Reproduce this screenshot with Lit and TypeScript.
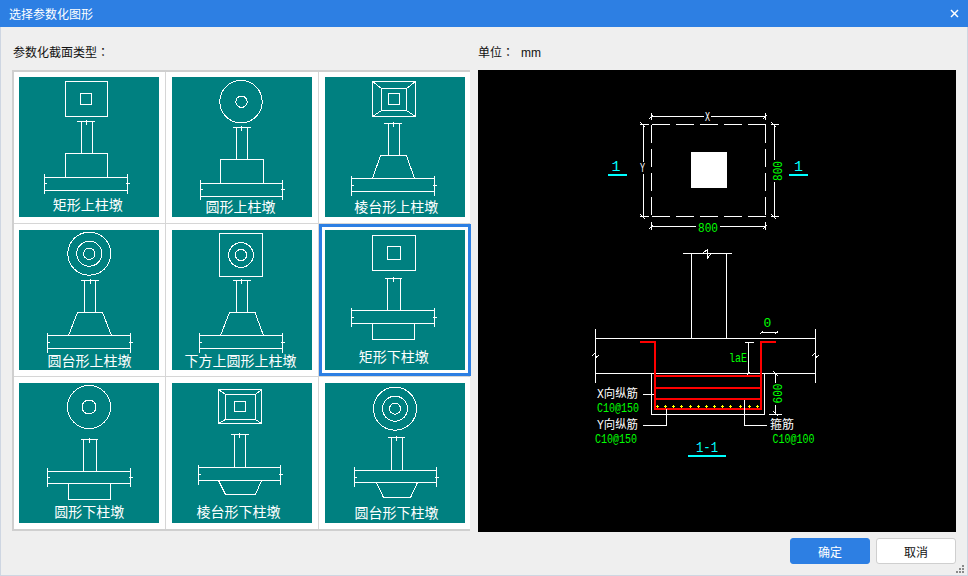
import { LitElement, html, svg, css } from 'lit';
import { customElement } from 'lit/decorators.js';

type Box = [number, number, number, number];

interface Tile {
  label: string;
  tx: number;
  ty: number;
  rects?: Box[];
  circles?: [number, number, number][];
  frame?: boolean; // diagonals between rects[0] and rects[1]
  dim: [number, number, number, number]; // x1, x2, y, tick x
  col: [number, number, number]; // x1, x2, bottom y
  base: string; // pedestal outline
  slab: [number, number, number, number, number, number, number]; // x1, x2, y1, y2, ext top, ext bottom, tick y
}

const TILES: Tile[] = [
  {
    label: '矩形上柱墩', tx: 68.7, ty: 133,
    rects: [[46.5, 4.5, 88.5, 39.5], [61.5, 16.5, 72.5, 27.5]],
    dim: [58, 76, 44.5, 67.5], col: [62.5, 73.5, 76.5],
    base: '46.5,100.5 46.5,76.5 88.5,76.5 88.5,100.5',
    slab: [25.5, 108.5, 100.5, 113.5, 97, 116.5, 106.5],
  },
  {
    label: '圆形上柱墩', tx: 68.5, ty: 135,
    circles: [[69, 24.7, 21.2], [69.5, 24.7, 5.7]],
    dim: [60.5, 78.5, 50.5, 69.5], col: [64.5, 75.5, 82.5],
    base: '48.5,106.5 48.5,82.5 91.5,82.5 91.5,106.5',
    slab: [28.5, 110.5, 106.5, 119.5, 103, 123, 112.5],
  },
  {
    label: '棱台形上柱墩', tx: 71.3, ty: 135,
    rects: [[47.5, 4.5, 90.5, 39.5], [56.5, 11.5, 81.5, 33.5], [63.5, 16.5, 74.5, 27.5]],
    frame: true,
    dim: [59, 77, 46.5, 68], col: [63.5, 74.5, 78.5],
    base: '47.5,101.5 55.5,78.5 81.5,78.5 89.5,101.5',
    slab: [26.5, 109.5, 101.5, 114.5, 99, 118.5, 108],
  },
  {
    label: '圆台形上柱墩', tx: 70.5, ty: 136,
    circles: [[70.3, 23.7, 21.5], [70.3, 23.7, 12.5], [70.3, 23.7, 5.7]],
    dim: [61.5, 79.5, 50.5, 71], col: [65.5, 76.5, 82.5],
    base: '49.5,105.5 58.5,82.5 83.5,82.5 92.5,105.5',
    slab: [28.5, 111.5, 105.5, 118.5, 103, 122.5, 112],
  },
  {
    label: '下方上圆形上柱墩', tx: 68.5, ty: 136,
    rects: [[47.5, 3.5, 90.5, 46.5]],
    circles: [[69, 25, 12.3], [69, 25, 5.7]],
    dim: [60.5, 78.5, 50.5, 69.5], col: [64.5, 75.5, 82.5],
    base: '48.5,105.5 57.5,82.5 83,82.5 91.5,105.5',
    slab: [27.5, 110.5, 105.5, 118.5, 103, 122.5, 112.5],
  },
  {
    label: '矩形下柱墩', tx: 68.7, ty: 132,
    rects: [[47.5, 5.5, 90.5, 40.5], [62.5, 16.5, 75.5, 29.5]],
    dim: [59.5, 77, 48.5, 68.5], col: [62.5, 75.5, 80.5],
    base: '47.5,93.5 47.5,109.5 89.5,109.5 89.5,93.5',
    slab: [26.5, 109.5, 80.5, 93.5, 77.5, 96.5, 87],
  },
  {
    label: '圆形下柱墩', tx: 70.3, ty: 134,
    circles: [[70, 24, 21.5], [70, 24, 7]],
    dim: [61.5, 78.5, 56.5, 70.5], col: [64.5, 77.5, 88.5],
    base: '49.5,100.5 49.5,116.5 91.5,116.5 91.5,100.5',
    slab: [28.5, 111.5, 88.5, 100.5, 84.5, 103.5, 94.5],
  },
  {
    label: '棱台形下柱墩', tx: 66.5, ty: 134,
    rects: [[46.5, 6.5, 89.5, 40.5], [53.5, 11.5, 83.5, 36.5], [62.5, 18.5, 73.5, 28.5]],
    frame: true,
    dim: [58.5, 76.5, 51.5, 67.5], col: [62.5, 73.5, 84.5],
    base: '46.5,97.5 53.5,111.5 83.5,111.5 89.5,97.5',
    slab: [26.5, 108.5, 84.5, 97.5, 82, 101.5, 91],
  },
  {
    label: '圆台形下柱墩', tx: 71.5, ty: 135,
    circles: [[70, 25.7, 21.5], [70, 25.7, 12.5], [70, 25.7, 5.5]],
    dim: [62.5, 80, 54.5, 71.5], col: [66.5, 77.5, 87.5],
    base: '51.5,99.5 58.5,114.5 85.5,114.5 92.5,99.5',
    slab: [29.5, 111.5, 87.5, 99.5, 83.5, 103.5, 94.5],
  },
];

const SELECTED = 5;
const REBAR_DOTS = [657, 665, 673, 681, 690, 698, 706, 714, 722, 730, 740, 749, 757];

const seg = (x1: number, y1: number, x2: number, y2: number) =>
  svg`<line x1=${x1} y1=${y1} x2=${x2} y2=${y2}></line>`;

function tileGraphic(t: Tile) {
  const [sx1, sx2, sy1, sy2, ext1, ext2, ty] = t.slab;
  const [dx1, dx2, dy, dt] = t.dim;
  const [cx1, cx2, cb] = t.col;
  const outer = t.rects?.[0];
  const mid = t.rects?.[1];
  return html`<svg class="tile" width="140" height="140" viewBox="0 0 140 140" shape-rendering="crispEdges">
    ${(t.rects ?? []).map(
      ([a, b, c, d]) => svg`<rect x=${a} y=${b} width=${c - a} height=${d - b}></rect>`,
    )}
    ${t.frame && outer && mid
      ? svg`${seg(outer[0], outer[1], mid[0], mid[1])}${seg(outer[2], outer[1], mid[2], mid[1])}
            ${seg(outer[0], outer[3], mid[0], mid[3])}${seg(outer[2], outer[3], mid[2], mid[3])}`
      : ''}
    ${(t.circles ?? []).map(([x, y, r]) => svg`<circle cx=${x} cy=${y} r=${r}></circle>`)}
    ${seg(dx1, dy, dx2, dy)}${seg(dt, dy - 2, dt, dy + 3)}
    ${seg(cx1, dy, cx1, cb)}${seg(cx2, dy, cx2, cb)}
    <polyline points=${t.base}></polyline>
    ${seg(sx1, sy1, sx2, sy1)}${seg(sx1, sy2, sx2, sy2)}
    ${seg(sx1, ext1, sx1, ext2)}${seg(sx2, ext1, sx2, ext2)}
    ${seg(sx1 - 1, ty, sx1 + 2, ty)}${seg(sx2 - 2, ty, sx2 + 2, ty)}
    <text x=${t.tx} y=${t.ty} text-anchor="middle">${t.label}</text>
  </svg>`;
}

@customElement('app-root')
export class AppRoot extends LitElement {
  static styles = css`
    :host {
      display: block;
      width: 968px;
      height: 576px;
      font-family: "Noto Sans CJK SC", "Liberation Sans", sans-serif;
      font-size: 12px;
      color: #111;
    }
    .dialog {
      position: relative;
      display: flex;
      flex-direction: column;
      width: 100%;
      height: 100%;
      background: #efefef;
    }
    .titlebar {
      display: flex;
      align-items: center;
      justify-content: space-between;
      flex: none;
      height: 27px;
      padding: 0 9px;
      background: #2d7fe3;
      color: #fff;
      line-height: 27px;
    }
    .close {
      display: block;
    }
    .close line {
      stroke: #fff;
      stroke-width: 1.5;
    }
    .body {
      flex: 1;
      display: flex;
      flex-direction: column;
      padding: 0 11px;
      border: solid #ced6e2;
      border-width: 0 1px 1px 1px;
    }
    .panels {
      display: grid;
      grid-template-columns: 460px 478px;
      gap: 6px;
    }
    .panel-label {
      height: 26px;
      padding-top: 17px;
      line-height: 16px;
    }
    .left .panel-label {
      padding-left: 1px;
    }
    .colon {
      font-family: "Noto Sans CJK TC", sans-serif;
    }
    .unit {
      margin-left: 7px;
      font-family: "Liberation Sans", sans-serif;
    }
    .picker {
      display: grid;
      grid-template-columns: 151px 152px 151px;
      grid-template-rows: 151px 152px 152px;
      gap: 1px;
      width: 454px;
      border: 2px solid #cfcfcf;
      background: #d6d6d6;
    }
    .cell {
      position: relative;
      box-sizing: border-box;
      padding: 6px 0 0 6px;
      background: #fff;
    }
    .cell.first-col {
      padding-left: 5px;
    }
    .cell.first-row {
      padding-top: 5px;
    }
    .cell.selected::after {
      content: '';
      position: absolute;
      inset: 0 -1px 0 0;
      border: 3px solid #2d7fe3;
    }
    .tile {
      display: block;
      background: #008080;
    }
    .tile rect,
    .tile circle,
    .tile polyline,
    .tile line {
      fill: none;
      stroke: #fff;
      stroke-width: 1;
    }
    .tile text {
      fill: #fff;
      stroke: none;
      font-size: 14px;
      font-family: "Noto Sans CJK SC", sans-serif;
    }
    .preview {
      display: block;
      width: 478px;
      height: 462px;
      background: #000;
    }
    .preview line,
    .preview path,
    .preview rect.outline {
      fill: none;
      stroke: #fff;
      stroke-width: 1;
    }
    .preview text {
      font-family: "Liberation Mono", monospace;
      font-size: 13px;
      fill: #0f0;
    }
    .preview text.cjk {
      font-family: "Liberation Mono", "Noto Sans CJK SC", monospace;
      font-size: 12px;
      fill: #fff;
    }
    .preview text.mark {
      fill: #0ff;
      font-size: 15px;
    }
    .preview text.small {
      fill: #fff;
      font-size: 12px;
    }
    .preview .dash {
      stroke-dasharray: 18 6;
    }
    .preview .cyan {
      stroke: #0ff;
      stroke-width: 2;
    }
    .preview .red {
      stroke: #f00;
      stroke-width: 2;
    }
    .preview .dot {
      stroke: #ff0;
    }
    .preview .solid {
      fill: #fff;
    }
    .footer {
      display: flex;
      justify-content: flex-end;
      gap: 6px;
      padding-top: 6px;
    }
    .btn {
      box-sizing: border-box;
      width: 80px;
      height: 26px;
      padding: 0;
      border: 1px solid #cfcfcf;
      border-radius: 3px;
      background: #fff;
      color: #111;
      font: inherit;
    }
    .btn.primary {
      border-color: #2d7fe3;
      background: #2d7fe3;
      color: #fff;
    }
    .grip {
      position: absolute;
      right: 3px;
      bottom: 3px;
    }
    .grip rect {
      fill: #8a8a8a;
    }
  `;

  private renderPreview() {
    return html`<svg class="preview" viewBox="478 70 478 462" shape-rendering="crispEdges">
      <!-- plan view -->
      ${seg(651.5, 116.5, 704, 116.5)}${seg(711, 116.5, 765.5, 116.5)}
      ${seg(651.5, 113, 651.5, 120)}${seg(765.5, 113, 765.5, 120)}
      ${seg(649, 119, 653, 115)}${seg(763, 119, 767, 115)}
      <text class="small" x="707.5" y="120.5" text-anchor="middle" textLength="5" lengthAdjust="spacingAndGlyphs">X</text>
      <line class="dash" x1="651.5" y1="124.5" x2="765.5" y2="124.5"></line>
      <line class="dash" x1="651.5" y1="216.5" x2="765.5" y2="216.5"></line>
      <line class="dash" x1="651.5" y1="124.5" x2="651.5" y2="216.5"></line>
      <line class="dash" x1="765.5" y1="124.5" x2="765.5" y2="216.5"></line>
      ${seg(643.5, 124.5, 643.5, 162)}${seg(643.5, 174, 643.5, 216.5)}
      ${seg(640, 124.5, 649, 124.5)}${seg(640, 216.5, 649, 216.5)}
      ${seg(640, 122, 645, 127)}${seg(640, 214, 645, 219)}
      <text class="small" x="642.5" y="172" text-anchor="middle" textLength="5" lengthAdjust="spacingAndGlyphs">Y</text>
      ${seg(774.5, 124.5, 774.5, 160)}${seg(774.5, 182, 774.5, 216.5)}
      ${seg(770.5, 124.5, 779, 124.5)}${seg(770.5, 216.5, 779, 216.5)}
      ${seg(771, 122, 776, 127)}${seg(771, 214, 776, 219)}
      <text x="0" y="0" text-anchor="middle" transform="translate(782 171) rotate(-90)" textLength="20" lengthAdjust="spacingAndGlyphs">800</text>
      ${seg(651.5, 226.5, 696, 226.5)}${seg(720, 226.5, 765.5, 226.5)}
      ${seg(651.5, 222, 651.5, 230)}${seg(765.5, 222, 765.5, 230)}
      ${seg(649, 229, 653, 225)}${seg(763, 229, 767, 225)}
      <text x="708" y="232" text-anchor="middle" textLength="20" lengthAdjust="spacingAndGlyphs">800</text>
      <rect class="solid" x="691" y="152" width="36" height="36"></rect>
      <text class="mark" x="616" y="171" text-anchor="middle">1</text>
      <line class="cyan" x1="608" y1="175" x2="627" y2="175"></line>
      <text class="mark" x="798.5" y="171" text-anchor="middle">1</text>
      <line class="cyan" x1="789" y1="175" x2="808" y2="175"></line>

      <!-- section 1-1 -->
      ${seg(683, 253.5, 732, 253.5)}
      <path d="M703.5 252.5 L707.5 249.5 V258 L711 254"></path>
      ${seg(691.5, 253.5, 691.5, 338.5)}${seg(726.5, 253.5, 726.5, 338.5)}
      ${seg(595.5, 338.5, 815.5, 338.5)}${seg(595.5, 373.5, 815.5, 373.5)}
      ${seg(595.5, 329, 595.5, 383)}${seg(815.5, 329, 815.5, 383)}
      <path d="M592 356 L595.5 353 V358 L599 355"></path>
      <path d="M812 356 L815.5 353 V358 L819 355"></path>
      <rect class="outline" x="651.5" y="373.5" width="113" height="41"></rect>

      ${seg(748.5, 342, 748.5, 373.5)}${seg(745, 342.5, 754, 342.5)}${seg(746, 376, 750, 372)}
      ${seg(761, 332.5, 778, 332.5)}${seg(760, 334, 763, 331)}${seg(775, 334, 778, 331)}
      <text x="767.5" y="327" text-anchor="middle">0</text>
      <text x="738" y="361.5" text-anchor="middle" textLength="18" lengthAdjust="spacingAndGlyphs">laE</text>

      ${seg(775.5, 373.5, 775.5, 383)}${seg(775.5, 405, 775.5, 414)}
      ${seg(769, 414.5, 782, 414.5)}${seg(773, 371, 778, 376)}${seg(773, 411, 778, 416)}
      <text x="0" y="0" text-anchor="middle" transform="translate(782 393.5) rotate(-90)" textLength="20" lengthAdjust="spacingAndGlyphs">600</text>

      <path class="red" d="M640 342 H655 V409 H761 V342 H776"></path>
      <line class="red" x1="655" y1="376" x2="761" y2="376"></line>
      <line class="red" x1="655" y1="388" x2="761" y2="388"></line>
      <line class="red" x1="655" y1="399" x2="761" y2="399"></line>
      ${REBAR_DOTS.map(
        (x) => svg`<path class="dot" d="M${x - 1} 406.5 H${x + 2} M${x + 0.5} 405 V408"></path>`,
      )}

      ${seg(643, 394.5, 654, 394.5)}
      <path d="M643 425.5 H666.5 V409"></path>
      <path d="M744.5 399.5 V425.5 H767"></path>
      <text class="cjk" x="597" y="398" textLength="41" lengthAdjust="spacingAndGlyphs">X向纵筋</text>
      <text x="597" y="411.5" textLength="42" lengthAdjust="spacingAndGlyphs">C10@150</text>
      <text class="cjk" x="597" y="429" textLength="41" lengthAdjust="spacingAndGlyphs">Y向纵筋</text>
      <text x="595" y="442.5" textLength="42" lengthAdjust="spacingAndGlyphs">C10@150</text>
      <text class="cjk" x="770" y="429">箍筋</text>
      <text x="772.5" y="442.5" textLength="42" lengthAdjust="spacingAndGlyphs">C10@100</text>
      <text class="mark" x="707" y="451.5" text-anchor="middle" textLength="22" lengthAdjust="spacingAndGlyphs">1-1</text>
      <line class="cyan" x1="688" y1="456" x2="726" y2="456"></line>
    </svg>`;
  }

  render() {
    return html`<div class="dialog">
      <div class="titlebar">
        <span>选择参数化图形</span>
        <svg class="close" width="9" height="9" viewBox="0 0 9 9">
          <line x1="1" y1="1" x2="8" y2="8"></line>
          <line x1="8" y1="1" x2="1" y2="8"></line>
        </svg>
      </div>
      <div class="body">
        <div class="panels">
          <div class="left">
            <div class="panel-label">参数化截面类型<span class="colon">：</span></div>
            <div class="picker">
              ${TILES.map((t, i) => {
                const cls = [
                  'cell',
                  i % 3 === 0 ? 'first-col' : '',
                  i < 3 ? 'first-row' : '',
                  i === SELECTED ? 'selected' : '',
                ].join(' ');
                return html`<div class=${cls}>${tileGraphic(t)}</div>`;
              })}
            </div>
          </div>
          <div class="right">
            <div class="panel-label">单位<span class="colon">：</span><span class="unit">mm</span></div>
            ${this.renderPreview()}
          </div>
        </div>
        <div class="footer">
          <button class="btn primary">确定</button>
          <button class="btn">取消</button>
        </div>
      </div>
      <svg class="grip" width="9" height="8" viewBox="0 0 9 8">
        <rect x="6" y="0" width="2" height="2"></rect>
        <rect x="3" y="3" width="2" height="2"></rect>
        <rect x="6" y="3" width="2" height="2"></rect>
        <rect x="0" y="6" width="2" height="2"></rect>
        <rect x="3" y="6" width="2" height="2"></rect>
        <rect x="6" y="6" width="2" height="2"></rect>
      </svg>
    </div>`;
  }
}
